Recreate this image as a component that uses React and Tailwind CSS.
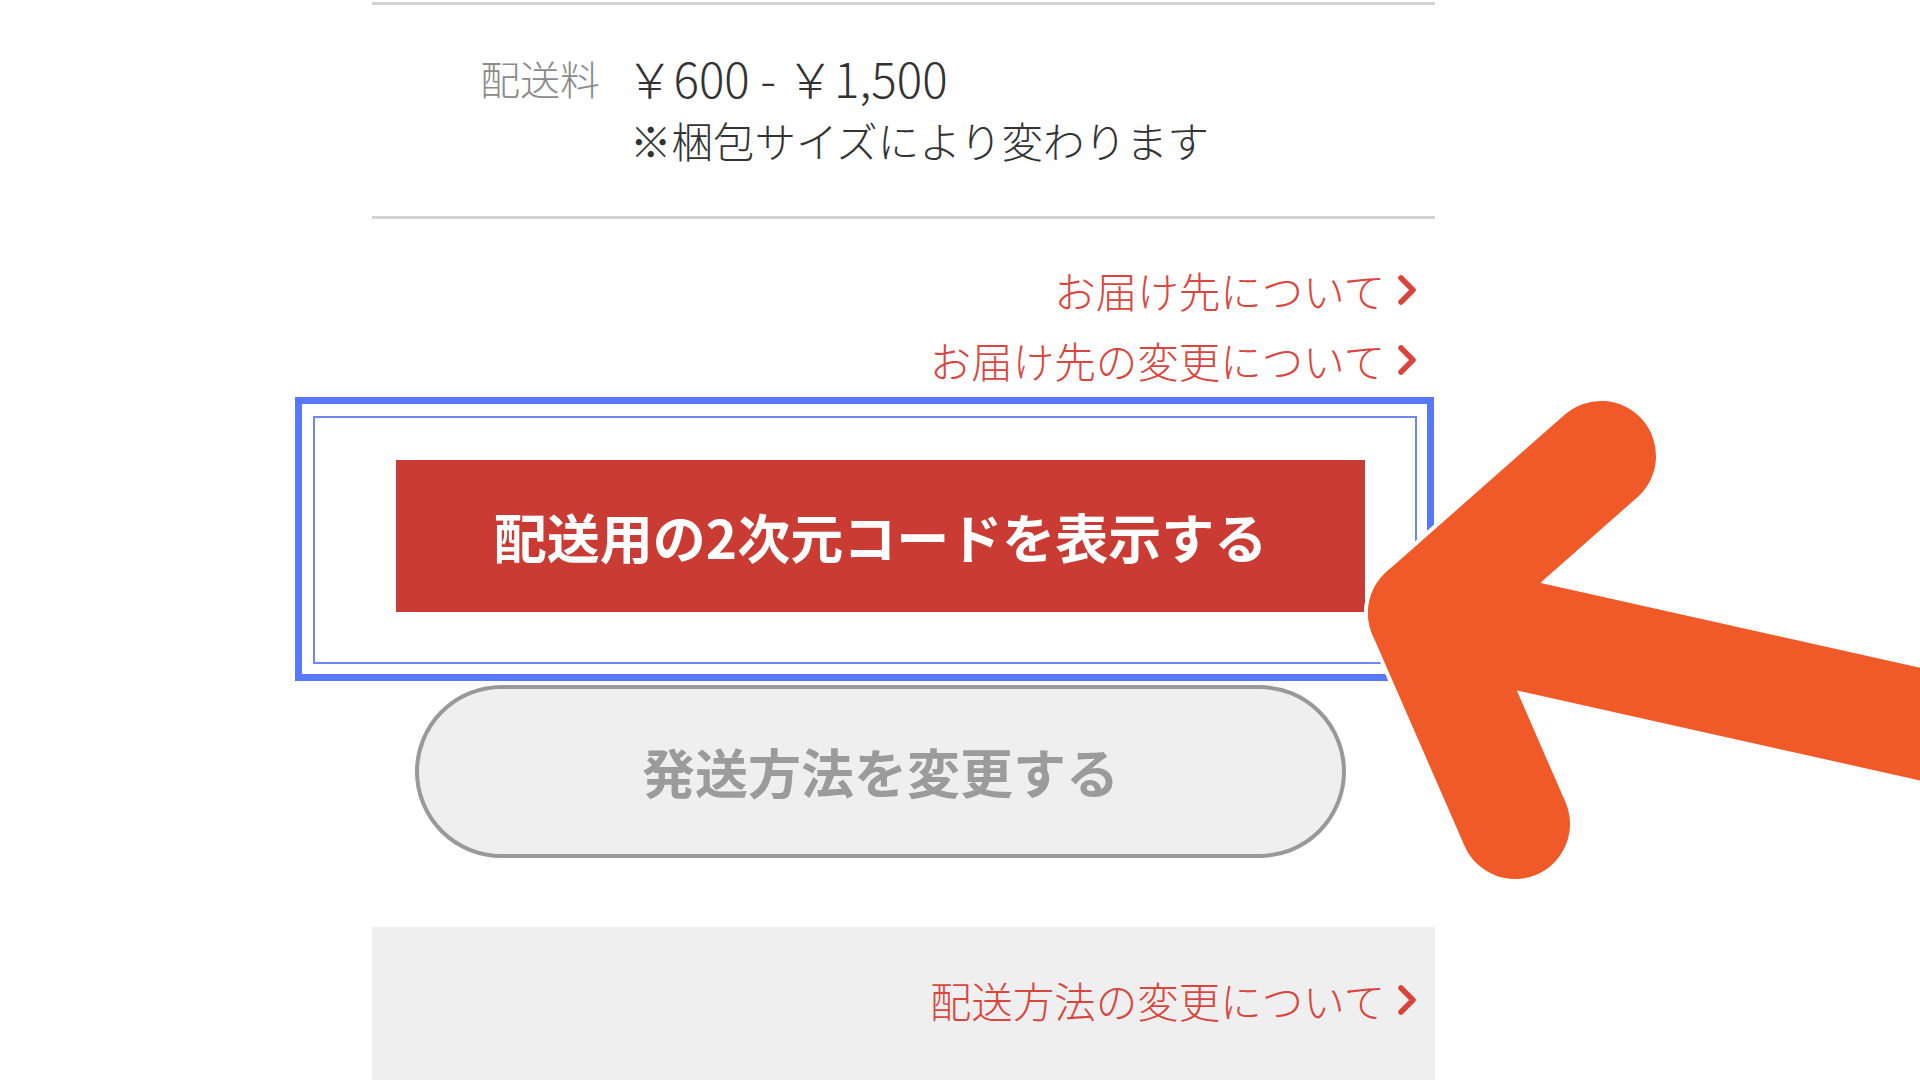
import React from "react";

function Chevron() {
  return (
    <svg width="24" height="32" viewBox="0 0 24 32" className="shrink-0">
      <path d="M6 4 L18 16 L6 28" fill="none" stroke="#d9443b" strokeWidth="5.5" strokeLinecap="round" strokeLinejoin="round" />
    </svg>
  );
}

function LinkRow({ children }) {
  return (
    <div className="flex items-center gap-[10px] text-[41.5px] leading-[70px] text-[#d9463d] font-light">
      <span>{children}</span>
      <Chevron />
    </div>
  );
}

export default function App() {
  return (
    <div className="relative w-[1920px] h-[1080px] overflow-hidden bg-white font-['Noto_Sans_CJK_JP','Noto_Sans',sans-serif]">
      <div className="ml-[372px] w-[1063px] flex flex-col">
        <div className="mt-[2px] h-[3px] bg-[#d3d3d3]" />

        <div className="flex items-start pl-[108px] pt-[42px] pb-[45px] font-light">
          <div className="w-[120px] text-[40px] leading-[62px] text-[#8a8a8a]">配送料</div>
          <div className="ml-[30px] leading-[62px] text-[#333333]">
            <div className="text-[47.5px] ml-[-4px]">￥600 - ￥1,500</div>
            <div className="text-[41.5px]">※梱包サイズにより変わります</div>
          </div>
        </div>

        <div className="h-[3px] bg-[#d3d3d3]" />

        <div className="flex flex-col items-end pr-[16px] pt-[36px]">
          <LinkRow>お届け先について</LinkRow>
          <LinkRow>お届け先の変更について</LinkRow>
        </div>

        <div className="mt-[2px] ml-[-77px] w-[1139px] border-[7px] border-[#5877fc] pl-[11px] pt-[12px] pr-[10px] pb-[10px]">
          <div className="border-2 border-[#6f86f0] pl-[81px] pt-[42px] pb-[50px]">
            <div className="w-[969px] h-[152px] bg-[#c93b33] flex items-center justify-center text-white font-bold text-[53px] leading-none">
              配送用の2次元コードを表示する
            </div>
          </div>
        </div>

        <div className="mt-[4px] ml-[43px] w-[931px] h-[173px] rounded-full border-[4px] border-[#999999] bg-[#efefef] flex items-center justify-center text-[#9b9b9b] font-bold text-[53px] leading-none">
          発送方法を変更する
        </div>

        <div className="mt-[69px] h-[160px] bg-[#efefef] flex flex-col items-end pr-[16px] pt-[38px]">
          <LinkRow>配送方法の変更について</LinkRow>
        </div>
      </div>

      <svg className="absolute inset-0 pointer-events-none" width="1920" height="1080" viewBox="0 0 1920 1080">
        <g fill="none" stroke="#ffffff" strokeWidth="118" strokeLinecap="round" strokeLinejoin="round">
          <path d="M1601 456 L1423 613 L1515 824" />
          <path d="M1423 613 L2000 742" />
        </g>
        <g fill="none" stroke="#f05a28" strokeWidth="110" strokeLinecap="round" strokeLinejoin="round">
          <path d="M1601 456 L1423 613 L1515 824" />
          <path d="M1423 613 L2000 742" />
        </g>
      </svg>
    </div>
  );
}
